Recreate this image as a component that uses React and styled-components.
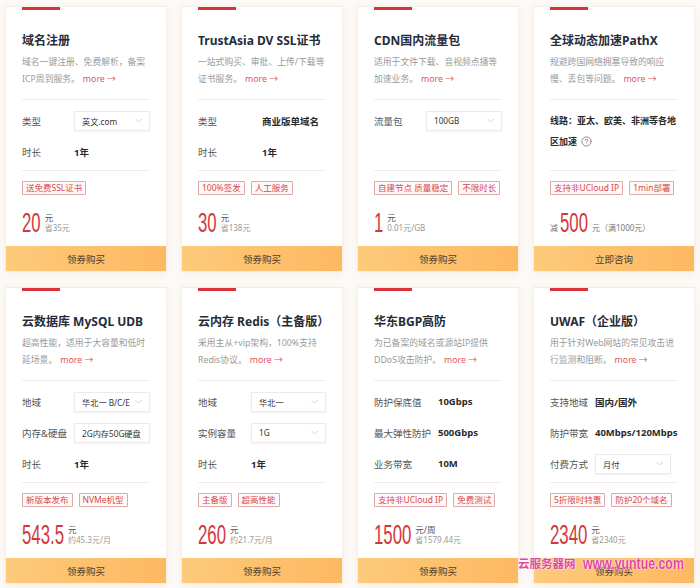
import React from 'react';
import styled, { createGlobalStyle } from 'styled-components';

const Global = createGlobalStyle`
  html, body { margin: 0; padding: 0; background: #fcf9f6; }
  body { font-family: "Noto Sans", "Noto Sans CJK SC", sans-serif; }
`;

const Page = styled.div`
  position: relative;
  width: 700px;
  height: 588px;
  box-sizing: border-box;
  padding: 7px 6px;
  background: #fcf9f6;
  overflow: hidden;
`;

const Grid = styled.div`
  display: grid;
  grid-template-columns: repeat(4, 160px);
  column-gap: 16px;
  row-gap: 17px;
`;

const Card = styled.div`
  display: flex;
  flex-direction: column;
  background: #fff;
  box-shadow: 0 0 0 1px #f3ece7, 0 2px 8px rgba(214, 170, 130, 0.14);
`;

const Accent = styled.div`
  width: 38px;
  height: 3px;
  margin-left: 16px;
  background: #d8323b;
`;

const Title = styled.div`
  margin: 21px 16px 0;
  font-size: 12px;
  line-height: 20px;
  font-weight: 700;
  color: #262c3a;
  white-space: nowrap;
`;

const Desc = styled.div`
  margin: 3px 16px 0;
  font-size: 8.8px;
  line-height: 17px;
  color: #9a9a9a;
`;

const More = styled.span`
  color: #e0575b;
  margin-left: 3px;
`;

const Divider = styled.div`
  height: 1px;
  margin: ${p => (p.$top ? '11px' : '0')} 16px 0;
  background: #f1ece8;
`;

const Specs = styled.div`
  flex: 1;
  padding: 5px 16px 3px;
`;

const SpecRow = styled.div`
  display: flex;
  align-items: center;
  height: 31px;
`;

const Label = styled.div`
  width: ${p => p.$w}px;
  flex-shrink: 0;
  font-size: 9.5px;
  color: #555;
  white-space: nowrap;
`;

const Value = styled.div`
  font-size: 9.5px;
  font-weight: 700;
  color: #2a2a2a;
  white-space: nowrap;
`;

const Select = styled.div`
  width: 76px;
  height: 20px;
  box-sizing: border-box;
  border: 1px solid #eeeaea;
  box-shadow: 0 1px 2px rgba(0, 0, 0, 0.05);
  display: flex;
  align-items: center;
  justify-content: space-between;
  gap: 2px;
  padding: 0 7px 0 7px;
  font-size: 8.2px;
  color: #333;
  white-space: nowrap;
  overflow: hidden;
  svg { flex-shrink: 0; }
`;

const Chevron = () => (
  <svg width="7" height="5" viewBox="0 0 7 5">
    <polyline points="0.5,1 3.5,4 6.5,1" fill="none" stroke="#cfcfcf" strokeWidth="0.9" />
  </svg>
);

const Note = styled.div`
  padding: 5px 0;
  font-size: 9px;
  line-height: 21px;
  font-weight: 700;
  color: #2a2a2a;
  svg { vertical-align: -2px; margin-left: 4px; }
`;

const Tags = styled.div`
  display: flex;
  gap: 6px;
  margin: 10px 16px 0;
`;

const Tag = styled.span`
  font-size: 8.5px;
  line-height: 12px;
  padding: 0 3px;
  border: 1px solid #e3a6a6;
  border-radius: 1px;
  color: #d4484b;
  background: #fffafa;
  white-space: nowrap;
`;

const Price = styled.div`
  display: flex;
  align-items: ${p => (p.$bottom ? 'flex-end' : 'center')};
  height: 22px;
  margin: 17px 16px 0;
`;

const NumBox = styled.span`
  display: inline-block;
  width: ${p => p.$w}px;
  height: 22px;
  margin-right: 4px;
  flex-shrink: 0;
  overflow: visible;
`;

const Num = styled.span`
  display: inline-block;
  font-family: "Liberation Sans", Arial, sans-serif;
  font-size: 28px;
  line-height: 22px;
  color: #d3383d;
  transform: scaleX(0.6);
  transform-origin: left center;
  white-space: nowrap;
`;

const Meta = styled.div`
  display: flex;
  flex-direction: column;
  font-size: 8.5px;
  line-height: 10px;
  color: #555;
  white-space: nowrap;
`;

const Sub = styled.span`
  font-size: 8px;
  color: #999;
`;

const Small = styled.span`
  font-size: 8px;
  line-height: 12px;
  color: #777;
  margin-right: ${p => p.$mr || 0}px;
  white-space: nowrap;
`;

const Button = styled.div`
  margin-top: 12px;
  height: 25px;
  display: flex;
  align-items: center;
  justify-content: center;
  background: linear-gradient(90deg, #fcca7b, #ffb862);
  color: #4d3d30;
  font-size: 9.5px;
`;

const Watermark = styled.div`
  position: absolute;
  left: 518px;
  top: 556px;
  width: 180px;
  display: flex;
  align-items: center;
  gap: 7px;
  color: #e2479c;
  font-weight: 700;
  white-space: nowrap;
  text-shadow: 0 0 1px #fff, 0 0 2px #fff;
  pointer-events: none;
`;

const WmCn = styled.span`
  font-size: 11.5px;
  line-height: 16px;
`;

const WmEn = styled.span`
  display: inline-block;
  font-family: "Liberation Sans", Arial, sans-serif;
  font-size: 16px;
  line-height: 16px;
  transform: scaleX(0.77);
  transform-origin: left center;
`;

const Help = () => (
  <svg width="11" height="11" viewBox="0 0 24 24" fill="none" stroke="#777" strokeWidth="1.8" strokeLinecap="round" strokeLinejoin="round">
    <circle cx="12" cy="12" r="10" />
    <path d="M9.09 9a3 3 0 0 1 5.83 1c0 2-3 3-3 3" />
    <path d="M12 17h.01" />
  </svg>
);

const widthOf = s => {
  let w = 0;
  for (const ch of s) w += ch === '.' ? 0.278 : 0.556;
  return w * 28 * 0.6;
};

const cards = [
  {
    title: '域名注册', desc: '域名一键注册、免费解析，备案ICP周到服务。', w: 52,
    specs: [{ l: '类型', sel: '英文.com' }, { l: '时长', v: '1年' }],
    tags: ['送免费SSL证书'], price: '20', unit: '元', sub: '省35元', btn: '领券购买',
  },
  {
    title: 'TrustAsia DV SSL证书', desc: '一站式购买、审批、上传/下载等证书服务。', w: 64,
    specs: [{ l: '类型', v: '商业版单域名' }, { l: '时长', v: '1年' }],
    tags: ['100%签发', '人工服务'], price: '30', unit: '元', sub: '省138元', btn: '领券购买',
  },
  {
    title: 'CDN国内流量包', desc: '适用于文件下载、音视频点播等加速业务。', w: 52,
    specs: [{ l: '流量包', sel: '100GB' }],
    tags: ['自建节点 质量稳定', '不限时长'], price: '1', unit: '元', sub: '0.01元/GB', btn: '领券购买',
  },
  {
    title: '全球动态加速PathX', desc: '规避跨国网络拥塞导致的响应慢、丢包等问题。', w: 52,
    note: '线路：亚太、欧美、非洲等各地区加速',
    tags: ['支持非UCloud IP', '1min部署'], price: '500', discount: true, btn: '立即咨询',
  },
  {
    title: '云数据库 MySQL UDB', desc: '超高性能，适用于大容量和低时延场景。', w: 52,
    specs: [{ l: '地域', sel: '华北一 B/C/E' }, { l: '内存&硬盘', sel: '2G内存50G硬盘', noArrow: true }, { l: '时长', v: '1年' }],
    tags: ['新版本发布', 'NVMe机型'], price: '543.5', unit: '元', sub: '约45.3元/月', btn: '领券购买',
  },
  {
    title: '云内存 Redis（主备版）', desc: '采用主从+vip架构，100%支持Redis协议。', w: 53,
    specs: [{ l: '地域', sel: '华北一' }, { l: '实例容量', sel: '1G' }, { l: '时长', v: '1年' }],
    tags: ['主备版', '超高性能'], price: '260', unit: '元', sub: '约21.7元/月', btn: '领券购买',
  },
  {
    title: '华东BGP高防', desc: '为已备案的域名或源站IP提供DDoS攻击防护。', w: 64,
    specs: [{ l: '防护保底值', v: '10Gbps' }, { l: '最大弹性防护', v: '500Gbps' }, { l: '业务带宽', v: '10M' }],
    tags: ['支持非UCloud IP', '免费测试'], price: '1500', unit: '元/周', sub: '省1579.44元', btn: '领券购买',
  },
  {
    title: 'UWAF（企业版）', desc: '用于针对Web网站的常见攻击进行监测和阻断。', w: 45,
    specs: [{ l: '支持地域', v: '国内/国外' }, { l: '防护带宽', v: '40Mbps/120Mbps' }, { l: '付费方式', sel: '月付' }],
    tags: ['5折限时特惠', '防护20个域名'], price: '2340', unit: '元', sub: '省2340元', btn: '领券购买',
  },
];

function Product({ c }) {
  return (
    <Card>
      <Accent />
      <Title>{c.title}</Title>
      <Desc>
        {c.desc}
        <More>more →</More>
      </Desc>
      <Divider $top />
      <Specs>
        {c.note ? (
          <Note>
            {c.note}
            <Help />
          </Note>
        ) : (
          c.specs.map(s => (
            <SpecRow key={s.l}>
              <Label $w={c.w}>{s.l}</Label>
              {s.sel ? (
                <Select>
                  <span>{s.sel}</span>
                  {!s.noArrow && <Chevron />}
                </Select>
              ) : (
                <Value>{s.v}</Value>
              )}
            </SpecRow>
          ))
        )}
      </Specs>
      <Divider />
      <Tags>
        {c.tags.map(t => (
          <Tag key={t}>{t}</Tag>
        ))}
      </Tags>
      {c.discount ? (
        <Price $bottom>
          <Small $mr={2}>减</Small>
          <NumBox $w={widthOf(c.price)}>
            <Num>{c.price}</Num>
          </NumBox>
          <Small>元（满1000元）</Small>
        </Price>
      ) : (
        <Price>
          <NumBox $w={widthOf(c.price)}>
            <Num>{c.price}</Num>
          </NumBox>
          <Meta>
            <span>{c.unit}</span>
            <Sub>{c.sub}</Sub>
          </Meta>
        </Price>
      )}
      <Button>{c.btn}</Button>
    </Card>
  );
}

export default function App() {
  return (
    <Page>
      <Global />
      <Grid>
        {cards.map(c => (
          <Product key={c.title} c={c} />
        ))}
      </Grid>
      <Watermark>
        <WmCn>云服务器网</WmCn>
        <WmEn>www.yuntue.com</WmEn>
      </Watermark>
    </Page>
  );
}
